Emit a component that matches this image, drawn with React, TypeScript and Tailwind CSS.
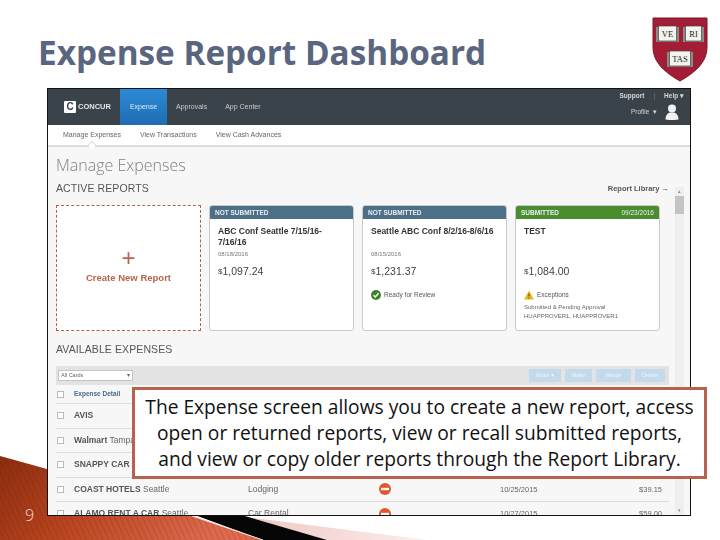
const rows = [
  { name: "AVIS", place: "", type: "", date: "", amount: "", flag: false },
  { name: "Walmart", place: "Tampa", type: "", date: "", amount: "", flag: false },
  { name: "SNAPPY CAR", place: "", type: "", date: "", amount: "", flag: false },
  { name: "COAST HOTELS", place: "Seattle", type: "Lodging", date: "10/25/2015", amount: "$39.15", flag: true },
  { name: "ALAMO RENT A CAR", place: "Seattle", type: "Car Rental", date: "10/27/2015", amount: "$59.00", flag: true },
];

function Book({ x, y, w, label }: { x: number; y: number; w: number; label: string }) {
  return (
    <g>
      <rect x={x} y={y + 1} width={w} height={15} fill="#8b8b85" />
      <rect x={x + 2.5} y={y} width={w - 5} height={15} fill="#f4f3ee" stroke="#444" strokeWidth="0.7" />
      <text x={x + w / 2} y={y + 11} fontSize="8.5">{label}</text>
    </g>
  );
}

function Shield() {
  return (
    <svg width="56" height="65" viewBox="0 0 56 65">
      <path d="M1 1H55V30C55 46 42 56 28 64C14 56 1 46 1 30Z" fill="#a41d36" stroke="#7d1527" strokeWidth="1" />
      <g fontFamily="'Liberation Serif', serif" fill="#222" textAnchor="middle">
        <Book x={4} y={9} w={23} label="VE" />
        <Book x={31} y={9} w={21} label="RI" />
        <Book x={15} y={34} w={26} label="TAS" />
      </g>
    </svg>
  );
}

function ReportCard({ status, date, title, sub, amount, tone, children }: {
  status: string;
  date?: string;
  title: string;
  sub?: string;
  amount: string;
  tone: string;
  children?: React.ReactNode;
}) {
  return (
    <div className="w-[145px] h-[126px] bg-white border border-[#c9c9c9] rounded-[3px] flex flex-col overflow-hidden">
      <div className={`h-[13px] px-[5px] flex items-center justify-between text-[6.5px] font-bold text-[#e8eef2] ${tone}`}>
        <span>{status}</span>
        {date && <span className="font-normal">{date}</span>}
      </div>
      <div className="px-[8px] pt-[7px] flex-1 flex flex-col">
        <div className="h-[23px] text-[8.5px] leading-[11px] font-bold text-[#333]">{title}</div>
        <div className="h-[12px] text-[6px] leading-[10px] text-[#777]">{sub}</div>
        <div className="mt-[4px] text-[10.5px] leading-[13px] text-[#444]">
          <span className="text-[8px] align-top">$</span>{amount}
        </div>
        {children}
      </div>
    </div>
  );
}

export default function App() {
  return (
    <div className="relative w-[720px] h-[540px] bg-white overflow-hidden font-['Liberation_Sans',sans-serif]">
      {/* slide background wedges */}
      <svg className="absolute left-0 top-0" width="720" height="540" viewBox="0 0 720 540">
        <defs>
          <linearGradient id="wedge" x1="0" y1="0" x2="1" y2="0.3">
            <stop offset="0" stopColor="#8a2c10" />
            <stop offset="0.45" stopColor="#b8441f" />
            <stop offset="1" stopColor="#dd6a4e" />
          </linearGradient>
          <linearGradient id="blush" x1="0" y1="0" x2="1" y2="0">
            <stop offset="0" stopColor="#efc6c1" />
            <stop offset="1" stopColor="#fbeeec" />
          </linearGradient>
          <pattern id="stripes" width="5" height="5" patternUnits="userSpaceOnUse" patternTransform="rotate(-25)">
            <rect x="0" y="0" width="1" height="5" fill="#5a1a08" fillOpacity="0.18" />
          </pattern>
        </defs>
        <polygon points="238,516 427,540 327,540" fill="url(#blush)" />
        <polygon points="0,456 47,469 192,516 263,540 0,540" fill="url(#wedge)" />
        <polygon points="0,456 47,469 192,516 263,540 0,540" fill="url(#stripes)" />
        <polygon points="192,514 238,514 327,540 263,540" fill="#060606" />
        <line x1="192" y1="516" x2="263" y2="540" stroke="#f3ddd6" strokeWidth="1" />
      </svg>

      <div className="relative flex flex-col">
        <div className="h-[88px] flex justify-between pl-[38px] pr-[12px]">
          <h1 className="mt-[30px] text-[33.3px] leading-[44px] font-bold text-[#5a657f] font-['Open_Sans',sans-serif]">
            Expense Report Dashboard
          </h1>
          <div className="mt-[17px]"><Shield /></div>
        </div>

        <div className="ml-[47px] w-[644px] h-[428px] border border-[#111] bg-[#f7f7f7] overflow-hidden flex flex-col">
          <div className="h-[36px] shrink-0 bg-[#3a424a] flex justify-between blur-[0.3px]">
            <div className="flex">
              <div className="w-[72px] flex items-center pl-[16px] gap-[2px]">
                <div className="w-[12px] h-[12px] rounded-[1px] bg-white text-[10px] leading-[12px] font-bold text-[#3a424a] text-center">C</div>
                <span className="text-[7.5px] font-bold text-[#e6e6e6]">CONCUR</span>
              </div>
              <div className="w-[47px] bg-gradient-to-b from-[#2c8ad6] to-[#1f6db3] flex items-center justify-center text-[7px] text-[#dbe9f5]">Expense</div>
              <div className="ml-[9px] flex items-center text-[7px] text-[#c9cdd0]">Approvals</div>
              <div className="ml-[18px] flex items-center text-[7px] text-[#c9cdd0]">App Center</div>
            </div>
            <div className="flex flex-col items-end pr-[6px] pt-[1px]">
              <div className="h-[12px] flex items-center gap-[9px] text-[6.5px] font-bold text-[#d5d8da]">
                <span>Support</span>
                <span className="font-normal text-[#777]">|</span>
                <span>Help ▾</span>
              </div>
              <div className="mt-[2px] flex items-center gap-[8px] pr-[5px] text-[6.5px] text-[#d5d8da]">
                <span>Profile &nbsp;▾</span>
                <svg width="14" height="16" viewBox="0 0 14 16" fill="#f2f2f2">
                  <circle cx="7" cy="4.5" r="4" />
                  <path d="M0.5 15.5C0.5 11 3 9 5 8.5H9C11 9 13.5 11 13.5 15.5C9 16.3 5 16.3 0.5 15.5Z" />
                </svg>
              </div>
            </div>
          </div>

          <div className="relative h-[22px] shrink-0 bg-white border-b-2 border-[#dcdcdc] pl-[15px] flex items-center gap-[19px] text-[7px] text-[#666] blur-[0.3px]">
            <span>Manage Expenses</span>
            <span>View Transactions</span>
            <span>View Cash Advances</span>
            <div className="absolute left-[41px] bottom-[-3px] w-[6px] h-[6px] rotate-45 bg-white border-l border-t border-[#dcdcdc]" />
          </div>

          <div className="flex flex-1 min-h-0 blur-[0.3px]">
            <div className="flex-1 min-w-0 pl-[8px] pr-[6px]">
              <div className="pt-[6px] text-[16px] leading-[24px] font-light text-[#808080] font-['Open_Sans',sans-serif]">Manage Expenses</div>
              <div className="mt-[5px] h-[14px] flex items-center justify-between">
                <span className="text-[10.5px] tracking-[0.1px] text-[#555]">ACTIVE REPORTS</span>
                <span className="text-[7.5px] font-bold text-[#555]">Report Library →</span>
              </div>
              <div className="mt-[9px] flex gap-[8px]">
                <div className="w-[145px] h-[126px] border-[1.5px] border-dashed border-[#bb5f48] bg-white flex flex-col items-center justify-center pb-[2px]">
                  <span className="text-[24px] leading-[20px] font-light text-[#b5654f]">+</span>
                  <span className="mt-[3px] text-[9.5px] font-bold text-[#b5654f]">Create New Report</span>
                </div>
                <ReportCard status="NOT SUBMITTED" title="ABC Conf Seattle 7/15/16-7/16/16" sub="08/18/2016" amount="1,097.24" tone="bg-[#4e6f88]" />
                <ReportCard status="NOT SUBMITTED" title="Seattle ABC Conf 8/2/16-8/6/16" sub="08/15/2016" amount="1,231.37" tone="bg-[#4e6f88]">
                  <div className="mt-[12px] flex items-center gap-[3px] text-[6.5px] text-[#555]">
                    <svg width="10" height="10" viewBox="0 0 10 10">
                      <circle cx="5" cy="5" r="5" fill="#3f7f2e" />
                      <path d="M2.5 5.2L4.3 7L7.6 3.2" fill="none" stroke="#fff" strokeWidth="1.4" />
                    </svg>
                    Ready for Review
                  </div>
                </ReportCard>
                <ReportCard status="SUBMITTED" date="09/23/2016" title="TEST" amount="1,084.00" tone="bg-[#4a8d2f]">
                  <div className="mt-[12px] flex items-center gap-[3px] text-[6.5px] text-[#555]">
                    <svg width="10" height="10" viewBox="0 0 10 10">
                      <path d="M5 0.5L10 9.5H0Z" fill="#e8b923" />
                      <path d="M5 3.5V6.5M5 7.5V8.6" stroke="#5a4300" strokeWidth="1" />
                    </svg>
                    Exceptions
                  </div>
                  <div className="mt-[3px] text-[6px] leading-[9px] text-[#666] whitespace-nowrap">
                    Submitted &amp; Pending Approval<br />HUAPPROVER1, HUAPPROVER1
                  </div>
                </ReportCard>
              </div>

              <div className="mt-[11px] h-[16px] flex items-center text-[10.5px] tracking-[0.1px] text-[#555]">AVAILABLE EXPENSES</div>
              <div className="mt-[8px] h-[19px] bg-[#e3e3e3] flex items-center justify-between pl-[2px] pr-[4px]">
                <div className="w-[75px] h-[11px] bg-white border border-[#c4c4c4] flex items-center justify-between px-[2px] text-[5.5px] text-[#666]">
                  <span>All Cards</span><span>▾</span>
                </div>
                <div className="flex gap-[4px] text-[5.5px] text-[#eef5fb]">
                  <span className="w-[32px] h-[13px] rounded-[1px] bg-[#c3d9ec] flex items-center justify-center">Move ▾</span>
                  <span className="w-[27px] h-[13px] rounded-[1px] bg-[#c3d9ec] flex items-center justify-center">Make</span>
                  <span className="w-[35px] h-[13px] rounded-[1px] bg-[#c3d9ec] flex items-center justify-center">Merge</span>
                  <span className="w-[30px] h-[13px] rounded-[1px] bg-[#c3d9ec] flex items-center justify-center">Delete</span>
                </div>
              </div>
              <div className="h-[19px] flex items-center pl-[1px] gap-[10px] border-b border-[#ddd] text-[6.5px] font-bold text-[#4c6a86]">
                <span className="w-[7px] h-[7px] border border-[#bbb] bg-white" />
                Expense Detail
              </div>
              {rows.map((row) => (
                <div key={row.name} className="h-[24.5px] shrink-0 grid grid-cols-[17px_174px_130px_122px_90px_1fr] items-center pl-[1px] pr-[7px] border-b border-[#ddd] text-[8.5px] text-[#666]">
                  <span className="w-[7px] h-[7px] border border-[#bbb] bg-white" />
                  <span className="whitespace-nowrap"><b className="text-[#555]">{row.name}</b> {row.place}</span>
                  <span>{row.type}</span>
                  <span>
                    {row.flag && (
                      <svg className="ml-[1px]" width="12" height="12" viewBox="0 0 12 12">
                        <circle cx="6" cy="6" r="6" fill="#e2562d" />
                        <rect x="2" y="4.8" width="8" height="2.4" fill="#fff" />
                      </svg>
                    )}
                  </span>
                  <span className="text-[7.5px]">{row.date}</span>
                  <span className="text-[7.5px] text-right">{row.amount}</span>
                </div>
              ))}
            </div>
            <div className="w-[15px] shrink-0 pr-[6px] pt-[40px] flex flex-col text-[5px] text-[#888] text-center">
              <div className="h-[9px] leading-[9px] bg-[#efefef]">▴</div>
              <div className="h-[18px] bg-[#c4c4c4]" />
              <div className="flex-1 bg-[#efefef]" />
              <div className="h-[9px] leading-[9px] bg-[#efefef]">▾</div>
            </div>
          </div>
        </div>
      </div>

      <span className="absolute left-[25px] top-[504px] text-[16px] leading-[22px] font-light text-[#f3d9cf] font-['Open_Sans',sans-serif]">9</span>

      <div className="absolute left-[132px] top-[387px] w-[575px] h-[92px] bg-white border-[3px] border-[#b9614f] flex items-center justify-center text-center font-['Open_Sans',sans-serif] text-[19.2px] leading-[26px] text-[#111] whitespace-nowrap">
        <p>The Expense screen allows you to create a new report, access<br />open or returned reports, view or recall submitted reports,<br />and view or copy older reports through the Report Library.</p>
      </div>
    </div>
  );
}
